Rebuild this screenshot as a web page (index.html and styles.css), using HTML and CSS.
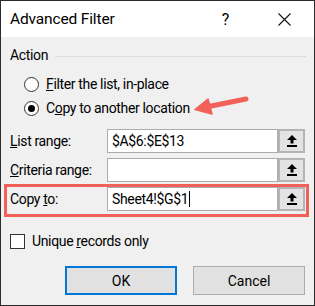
FILE: index.html
```html
<!DOCTYPE html>
<html lang="en">
<head>
    <meta charset="UTF-8">
    <meta name="viewport" content="width=device-width, initial-scale=1.0">
    <title>Advanced Filter</title>
    <link rel="stylesheet" href="styles.css">
</head>
<body>
    <div class="dialog">
        <div class="titlebar">
            <span class="title">Advanced Filter</span>
            <span class="help">?</span>
            <svg class="close" width="13" height="13" viewBox="0 0 13 13">
                <path d="M0.5 0.5 L12.5 12.5 M12.5 0.5 L0.5 12.5" stroke="#111" stroke-width="1.1" fill="none"/>
            </svg>
        </div>

        <div class="content">
            <div class="group-head">
                <span>Action</span>
                <div class="group-line"></div>
            </div>

            <div class="radios">
                <label class="radio-row">
                    <span class="radio"></span>
                    <span><u>F</u>ilter the list, in-place</span>
                </label>
                <label class="radio-row">
                    <span class="radio checked"></span>
                    <span>C<u>o</u>py to another location</span>
                </label>
            </div>

            <div class="field-row first">
                <span class="field-label"><u>L</u>ist range:</span>
                <div class="field-input">$A$6:$E$13</div>
                <div class="pick-btn">
                    <svg width="10" height="12" viewBox="0 0 10 12"><path d="M5 0 L10 5 L0 5 Z M3.5 5 H6.5 V8.5 H3.5 Z M0 10 H10 V12 H0 Z" fill="#000"/></svg>
                </div>
            </div>
            <div class="field-row">
                <span class="field-label"><u>C</u>riteria range:</span>
                <div class="field-input"></div>
                <div class="pick-btn">
                    <svg width="10" height="12" viewBox="0 0 10 12"><path d="M5 0 L10 5 L0 5 Z M3.5 5 H6.5 V8.5 H3.5 Z M0 10 H10 V12 H0 Z" fill="#000"/></svg>
                </div>
            </div>
            <div class="field-row highlight">
                <span class="field-label">Copy <u>t</u>o:</span>
                <div class="field-input"><span class="caret">Sheet4!$G$1</span></div>
                <div class="pick-btn">
                    <svg width="10" height="12" viewBox="0 0 10 12"><path d="M5 0 L10 5 L0 5 Z M3.5 5 H6.5 V8.5 H3.5 Z M0 10 H10 V12 H0 Z" fill="#000"/></svg>
                </div>
            </div>

            <label class="check-row">
                <span class="checkbox"></span>
                <span>Unique <u>r</u>ecords only</span>
            </label>

            <div class="actions">
                <button class="btn btn-ok">OK</button>
                <button class="btn">Cancel</button>
            </div>
        </div>

        <!-- annotation arrow -->
        <svg class="callout" width="60" height="26" viewBox="0 0 60 26">
            <path d="M55 7 L19 14.2" stroke="#f1615a" stroke-width="5" stroke-linecap="round" fill="none"/>
            <path d="M4 17.5 L17 7 L21 22 Z" fill="#f1615a" stroke="#f1615a" stroke-width="1.5" stroke-linejoin="round"/>
        </svg>
    </div>
</body>
</html>
```

FILE: styles.css
```css
body {
    margin: 0;
    font-family: Roboto, "Noto Sans", sans-serif;
    color: #000;
}

.dialog {
    position: relative;
    width: 315px;
    height: 306px;
    box-sizing: border-box;
    border: 1px solid #2b2b2b;
    background-color: #f0f0f0;
    font-size: 14px;
    letter-spacing: -0.35px;
}

.titlebar {
    height: 36px;
    background-color: #fff;
    display: flex;
    align-items: center;
    padding-left: 9px;
}

.title {
    font-size: 15.5px;
    letter-spacing: -0.15px;
    flex: 1;
}

.help {
    font-size: 16px;
    margin-right: 49px;
}

.close {
    margin-right: 23px;
}

.content {
    padding: 8px 8px 0 9px;
}

.group-head {
    display: flex;
    align-items: center;
    height: 20px;
}

.group-line {
    flex: 1;
    height: 1px;
    background-color: #dcdcdc;
    margin: 3px 0 0 7px;
}

.radios {
    margin-top: 7px;
    padding-left: 14px;
}

.radio-row {
    display: flex;
    align-items: center;
    height: 24px;
}

.radio {
    width: 13px;
    height: 13px;
    border: 1px solid #333;
    border-radius: 50%;
    background-color: #fff;
    margin-right: 7px;
    position: relative;
}

.radio.checked::after {
    content: "";
    position: absolute;
    left: 3px;
    top: 3px;
    width: 7px;
    height: 7px;
    border-radius: 50%;
    background-color: #000;
}

.field-row {
    display: grid;
    grid-template-columns: 97px 1fr 27px;
    align-items: center;
    height: 24px;
    margin-top: 5px;
    margin-right: 1px;
}

.field-row.first {
    margin-top: 9px;
}

.field-row.highlight {
    margin: 2px -3px 0 -6px;
    border: 3px solid #f1615a;
    padding: 0 1px 3px 3px;
}

.field-input {
    height: 24px;
    box-sizing: border-box;
    border: 1px solid #acacac;
    background-color: #fff;
    padding-left: 4px;
    line-height: 22px;
}

.caret {
    border-right: 1px solid #000;
    padding-right: 1px;
}

.pick-btn {
    height: 24px;
    box-sizing: border-box;
    border: 2px solid #b4b4b4;
    background-color: #e3e3e3;
    display: flex;
    align-items: center;
    justify-content: center;
}

.check-row {
    display: flex;
    align-items: center;
    height: 16px;
    margin-top: 16px;
}

.checkbox {
    width: 13px;
    height: 13px;
    border: 1px solid #333;
    background-color: #fff;
    margin-right: 7px;
}

.actions {
    display: flex;
    justify-content: flex-end;
    gap: 16px;
    margin-top: 17px;
    margin-right: 1px;
}

.btn {
    width: 112px;
    height: 29px;
    font-family: inherit;
    font-size: 14px;
    background-color: #e1e1e1;
    border: 1px solid #adadad;
    padding: 0;
}

.btn-ok {
    border: 2px solid #0078d7;
}

.callout {
    position: absolute;
    left: 190px;
    top: 91px;
}
```
